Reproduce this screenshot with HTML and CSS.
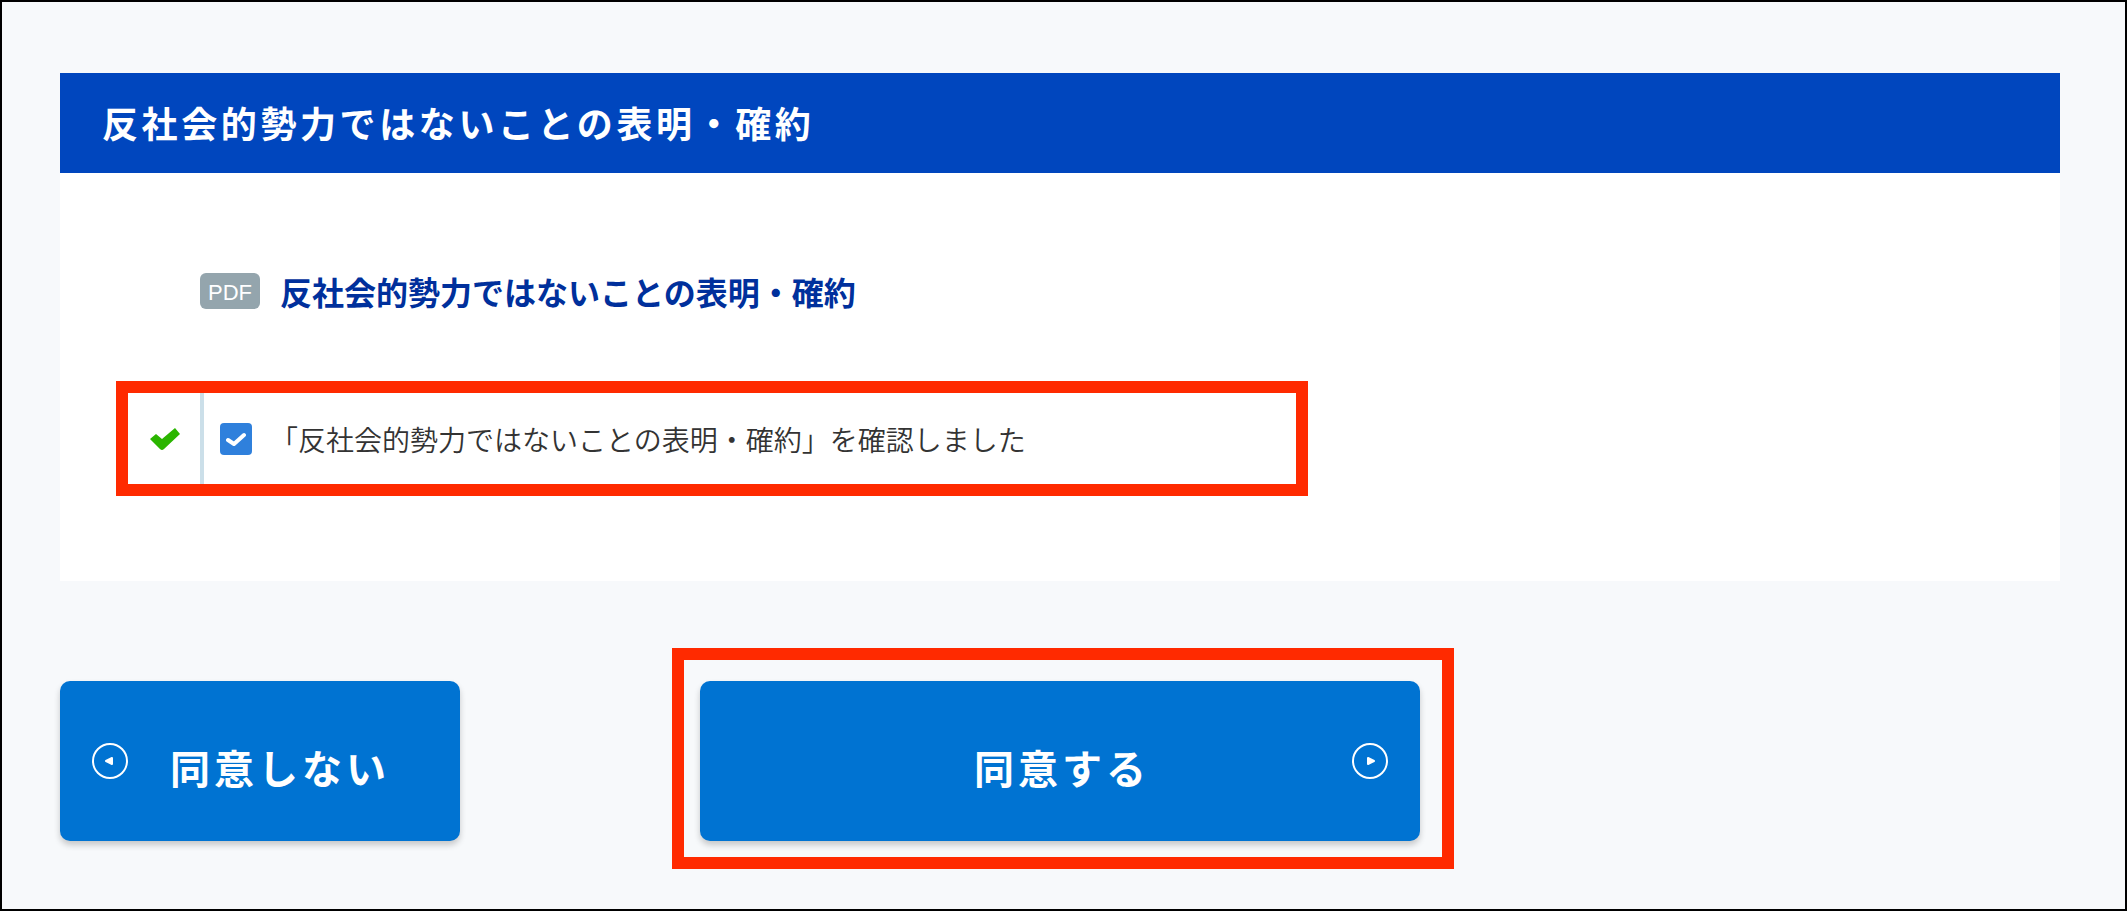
FILE: index.html
```html
<!DOCTYPE html>
<html lang="ja">
<head>
  <meta charset="UTF-8">
  <meta name="viewport" content="width=device-width, initial-scale=1">
  <title>反社会的勢力ではないことの表明・確約</title>
  <link rel="stylesheet" href="styles.css">
</head>
<body>
  <main class="page">
    <section class="panel">
      <h1 class="panel-title">反社会的勢力ではないことの表明・確約</h1>
      <div class="panel-body">
        <a class="pdf-link" href="#">
          <span class="pdf-badge">PDF</span>
          <span>反社会的勢力ではないことの表明・確約</span>
        </a>

        <div class="confirm highlight">
          <div class="confirm-status">
            <svg width="30" height="24" viewBox="0 0 30 24" aria-hidden="true">
              <path d="M0 12 L6 7 L12 12 L25 1 L30 7 L14 22 Q12 24 10 22 Z" fill="#2bb500"/>
            </svg>
          </div>
          <label class="confirm-label" for="confirm">
            <input type="checkbox" id="confirm" name="confirm" checked>
            <svg class="tick" width="20" height="15" viewBox="0 0 20 15" aria-hidden="true">
              <path d="M2 8 L8 12 L18 3" fill="none" stroke="#fff" stroke-width="4" stroke-linecap="round" stroke-linejoin="round"/>
            </svg>
            <span>「反社会的勢力ではないことの表明・確約」を確認しました</span>
          </label>
        </div>
      </div>
    </section>

    <div class="actions">
      <button type="button" class="btn btn-back">
        <svg class="btn-icon" width="36" height="36" viewBox="0 0 36 36" aria-hidden="true">
          <circle cx="18" cy="18" r="17" fill="none" stroke="#fff" stroke-width="2"/>
          <path d="M14 18 L20 15 V21 Z" fill="#fff" stroke="#fff" stroke-width="2" stroke-linejoin="round"/>
        </svg>
        <span>同意しない</span>
      </button>
      <div class="agree highlight">
        <button type="button" class="btn btn-next">
          <span>同意する</span>
          <svg class="btn-icon" width="36" height="36" viewBox="0 0 36 36" aria-hidden="true">
            <circle cx="18" cy="18" r="17" fill="none" stroke="#fff" stroke-width="2"/>
            <path d="M22 18 L16 15 V21 Z" fill="#fff" stroke="#fff" stroke-width="2" stroke-linejoin="round"/>
          </svg>
        </button>
      </div>
    </div>
  </main>
</body>
</html>
```
FILE: styles.css
```css
* {
  box-sizing: border-box;
}
body {
  margin: 0;
  background-color: #f7f9fb;
  color: #333;
  font-family: "Noto Sans CJK JP", sans-serif;
}
.page {
  min-height: 100vh;
  padding: 71px 65px 40px 58px;
  border: 2px solid #000;
}

/* Panel */
.panel {
  background-color: #fff;
}
.panel-title {
  margin: 0;
  padding: 23px 42px 25px;
  background-color: #0046be;
  color: #fff;
  font-size: 36px;
  font-weight: 700;
  line-height: 52px;
  letter-spacing: 0.1em;
}
.panel-body {
  padding: 96px 56px 85px;
}
.pdf-link {
  display: flex;
  align-items: center;
  gap: 20px;
  margin-left: 84px;
  color: #00309c;
  font-size: 32px;
  font-weight: 700;
  line-height: 44px;
  text-decoration: none;
}
.pdf-badge {
  padding: 3px 0 0;
  width: 60px;
  border-radius: 6px;
  background-color: #94a5ad;
  color: #fff;
  font-family: "Liberation Sans", Arial, sans-serif;
  font-size: 22px;
  font-weight: 400;
  line-height: 33px;
  text-align: center;
}

/* Red emphasis frame */
.highlight {
  border: 12px solid #ff2a00;
}
.confirm {
  display: flex;
  max-width: 1192px;
  margin-top: 68px;
}
.confirm-status {
  display: flex;
  align-items: center;
  justify-content: flex-end;
  width: 76px;
  padding-right: 20px;
  border-right: 4px solid #cbdfe9;
}
.confirm-label {
  position: relative;
  display: flex;
  align-items: center;
  gap: 18px;
  padding: 24px 16px 23px;
  font-size: 28px;
  font-weight: 350;
  line-height: 44px;
  cursor: pointer;
}
.confirm-label input {
  appearance: none;
  flex: none;
  width: 32px;
  height: 32px;
  margin: 0;
  border-radius: 4px;
  background-color: #2f80dc;
}
.tick {
  position: absolute;
  left: 22px;
  top: 39px;
  visibility: hidden;
}
.confirm-label input:checked + .tick {
  visibility: visible;
}

/* Buttons */
.actions {
  display: flex;
  align-items: flex-start;
  gap: 212px;
  margin-top: 67px;
}
.btn {
  position: relative;
  height: 160px;
  padding: 11px 0 0 4px;
  border: none;
  border-radius: 10px;
  background-color: #0073d2;
  box-shadow: 0 4px 6px rgba(0, 0, 0, 0.2);
  color: #fff;
  font-family: inherit;
  font-size: 40px;
  font-weight: 700;
  letter-spacing: 0.1em;
  cursor: pointer;
}
.btn-back {
  width: 400px;
  margin-top: 33px;
  padding-left: 40px;
}
.btn-next {
  width: 100%;
}
.btn-icon {
  position: absolute;
  top: 62px;
}
.btn-back .btn-icon {
  left: 32px;
}
.btn-next .btn-icon {
  right: 32px;
}
.agree {
  width: 782px;
  padding: 21px 22px 16px 16px;
}
```
